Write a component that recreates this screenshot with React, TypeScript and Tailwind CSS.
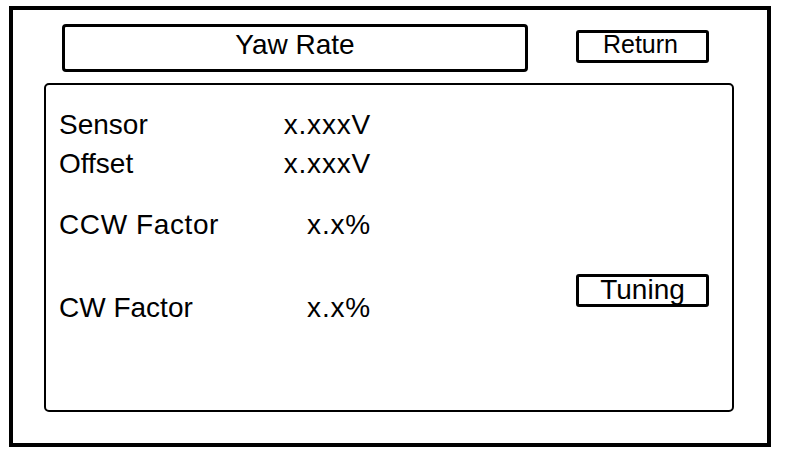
import React from 'react'

const rows = [
  { label: 'Sensor', value: 'x.xxxV', mt: 'mt-0' },
  { label: 'Offset', value: 'x.xxxV', mt: 'mt-[7px]' },
  { label: 'CCW Factor', value: 'x.x%', mt: 'mt-[29px]' },
  { label: 'CW Factor', value: 'x.x%', mt: 'mt-[51px]' },
]

const App = () => {
  return (
    <div className="w-[800px] h-[452px] bg-white pt-[6px] pl-[9px] text-black font-['Liberation_Sans',Arial,sans-serif]">
      <div className="w-[762px] h-[441px] border-4 border-black">
        {/* header */}
        <div className="flex items-start pt-[14px] pl-[49px]">
          <div className="w-[466px] h-[48px] border-[3px] border-black rounded-[4px] flex justify-center pt-[2px]">
            <span className="text-[28px] leading-[32px]">Yaw Rate</span>
          </div>
          <button className="ml-[48px] mt-[6px] w-[133px] h-[33px] border-[3px] border-black rounded-[3px] flex justify-center pr-[4px]">
            <span className="text-[25px] leading-[25px] mt-[-1px]">Return</span>
          </button>
        </div>

        {/* readings panel */}
        <div className="ml-[31px] mt-[11px] w-[690px] h-[329px] border-2 border-black rounded-[5px] flex">
          <div className="pl-[13px] pt-[24px] flex flex-col">
            {rows.map((r) => (
              <div key={r.label} className={`w-[311px] flex justify-between text-[28px] leading-[32px] ${r.mt}`}>
                <span className={r.label === 'CCW Factor' ? 'tracking-[0.6px]' : ''}>{r.label}</span>
                <span className="tracking-[0.8px] mr-[-1px]">{r.value}</span>
              </div>
            ))}
          </div>
          <div className="ml-auto mr-[23px] pt-[189px]">
            <button className="w-[133px] h-[33px] border-[3px] border-black rounded-[3px] flex justify-center">
              <span className="text-[28px] leading-[29px] mt-[-2px]">Tuning</span>
            </button>
          </div>
        </div>
      </div>
    </div>
  )
}

export default App
